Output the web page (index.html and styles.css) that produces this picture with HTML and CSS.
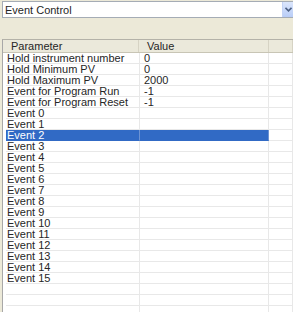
FILE: index.html
```html
<!DOCTYPE html>
<html lang="en">

<head>
    <meta name="viewport" content="width=device-width, initial-scale=1.0">
    <title>Event Control</title>
    <link rel="stylesheet" href="styles.css">
</head>

<body>
    <!-- Caixa de seleção -->
    <div class="combo">
        <span class="combo-texto">Event Control</span>
        <span class="combo-botao">
            <svg width="7" height="5" viewBox="0 0 7 5">
                <path d="M0.5 0.8 L3.5 3.8 L6.5 0.8" fill="none" stroke="#4d6185" stroke-width="1.6"/>
            </svg>
        </span>
    </div>

    <!-- Lista de parâmetros -->
    <div class="lista">
        <div class="cabecalho">
            <div class="col">Parameter</div>
            <div class="col">Value</div>
            <div class="col"></div>
        </div>
        <div class="corpo"></div>
    </div>

    <script type="text/javascript">
        const corpo = document.querySelector('.corpo');

        const linhas = [
            ["Hold instrument number", "0"],
            ["Hold Minimum PV", "0"],
            ["Hold Maximum PV", "2000"],
            ["Event for Program Run", "-1"],
            ["Event for Program Reset", "-1"]
        ];
        for (let i = 0; i < 16; i++) {
            linhas.push(["Event " + i, ""]);
        }
        // linhas vazias no fim
        for (let i = 0; i < 3; i++) {
            linhas.push(["", ""]);
        }

        for (const l of linhas) {
            let classe = l[0] == "Event 2" ? "linha selecionada" : "linha";
            corpo.innerHTML += `<div class="${classe}"><div class="col">${l[0]}</div><div class="col">${l[1]}</div><div class="col"></div></div>`;
        }
    </script>
</body>

</html>
```

FILE: styles.css
```css
* {
    padding: 0;
    margin: 0;
    box-sizing: border-box;
}

body {
    background-color: #ece9d8;
    font-family: 'Liberation Sans', Arial, sans-serif;
    font-size: 11px;
    color: #262626;
    width: 293px;
    height: 312px;
    overflow: hidden;
}

.combo {
    display: flex;
    align-items: center;
    margin: 1px 0 0 2px;
    height: 17px;
    background-color: white;
    border: 1px solid #a5acb5;
    border-right: none;
}

.combo-texto {
    flex: 1;
    padding-left: 2px;
}

.combo-botao {
    display: flex;
    justify-content: center;
    align-items: center;
    width: 11px;
    height: 15px;
    background: linear-gradient(#dbe6fc, #b9cdf7);
    border-left: 1px solid #c3d3f5;
}

.lista {
    margin: 21px 0 0 2px;
    border-top: 1px solid #b4b2a8;
    border-left: 1px solid #a8a8a8;
    background-color: white;
}

.cabecalho {
    display: grid;
    grid-template-columns: 136px 130px 1fr;
    height: 13px;
    background-color: #ebe9db;
    border-bottom: 1px solid #c8c5b5;
}

.cabecalho .col {
    padding-left: 8px;
    line-height: 12px;
    border-right: 1px solid #d6d3c4;
}

.corpo {
    padding-left: 3px;
}

.linha {
    display: grid;
    grid-template-columns: 134px 129px 1fr;
    height: 11px;
}

.linha .col {
    line-height: 10px;
    padding-left: 1px;
    border-right: 1px solid #e8e8e8;
    border-bottom: 1px solid #e8e8e8;
    white-space: nowrap;
}

.linha .col:nth-child(2) {
    padding-left: 4px;
}

.linha.selecionada .col:nth-child(1),
.linha.selecionada .col:nth-child(2) {
    background-color: #316ac5;
    color: white;
    border-bottom-color: #316ac5;
    border-right-color: #6d93d3;
}
```
